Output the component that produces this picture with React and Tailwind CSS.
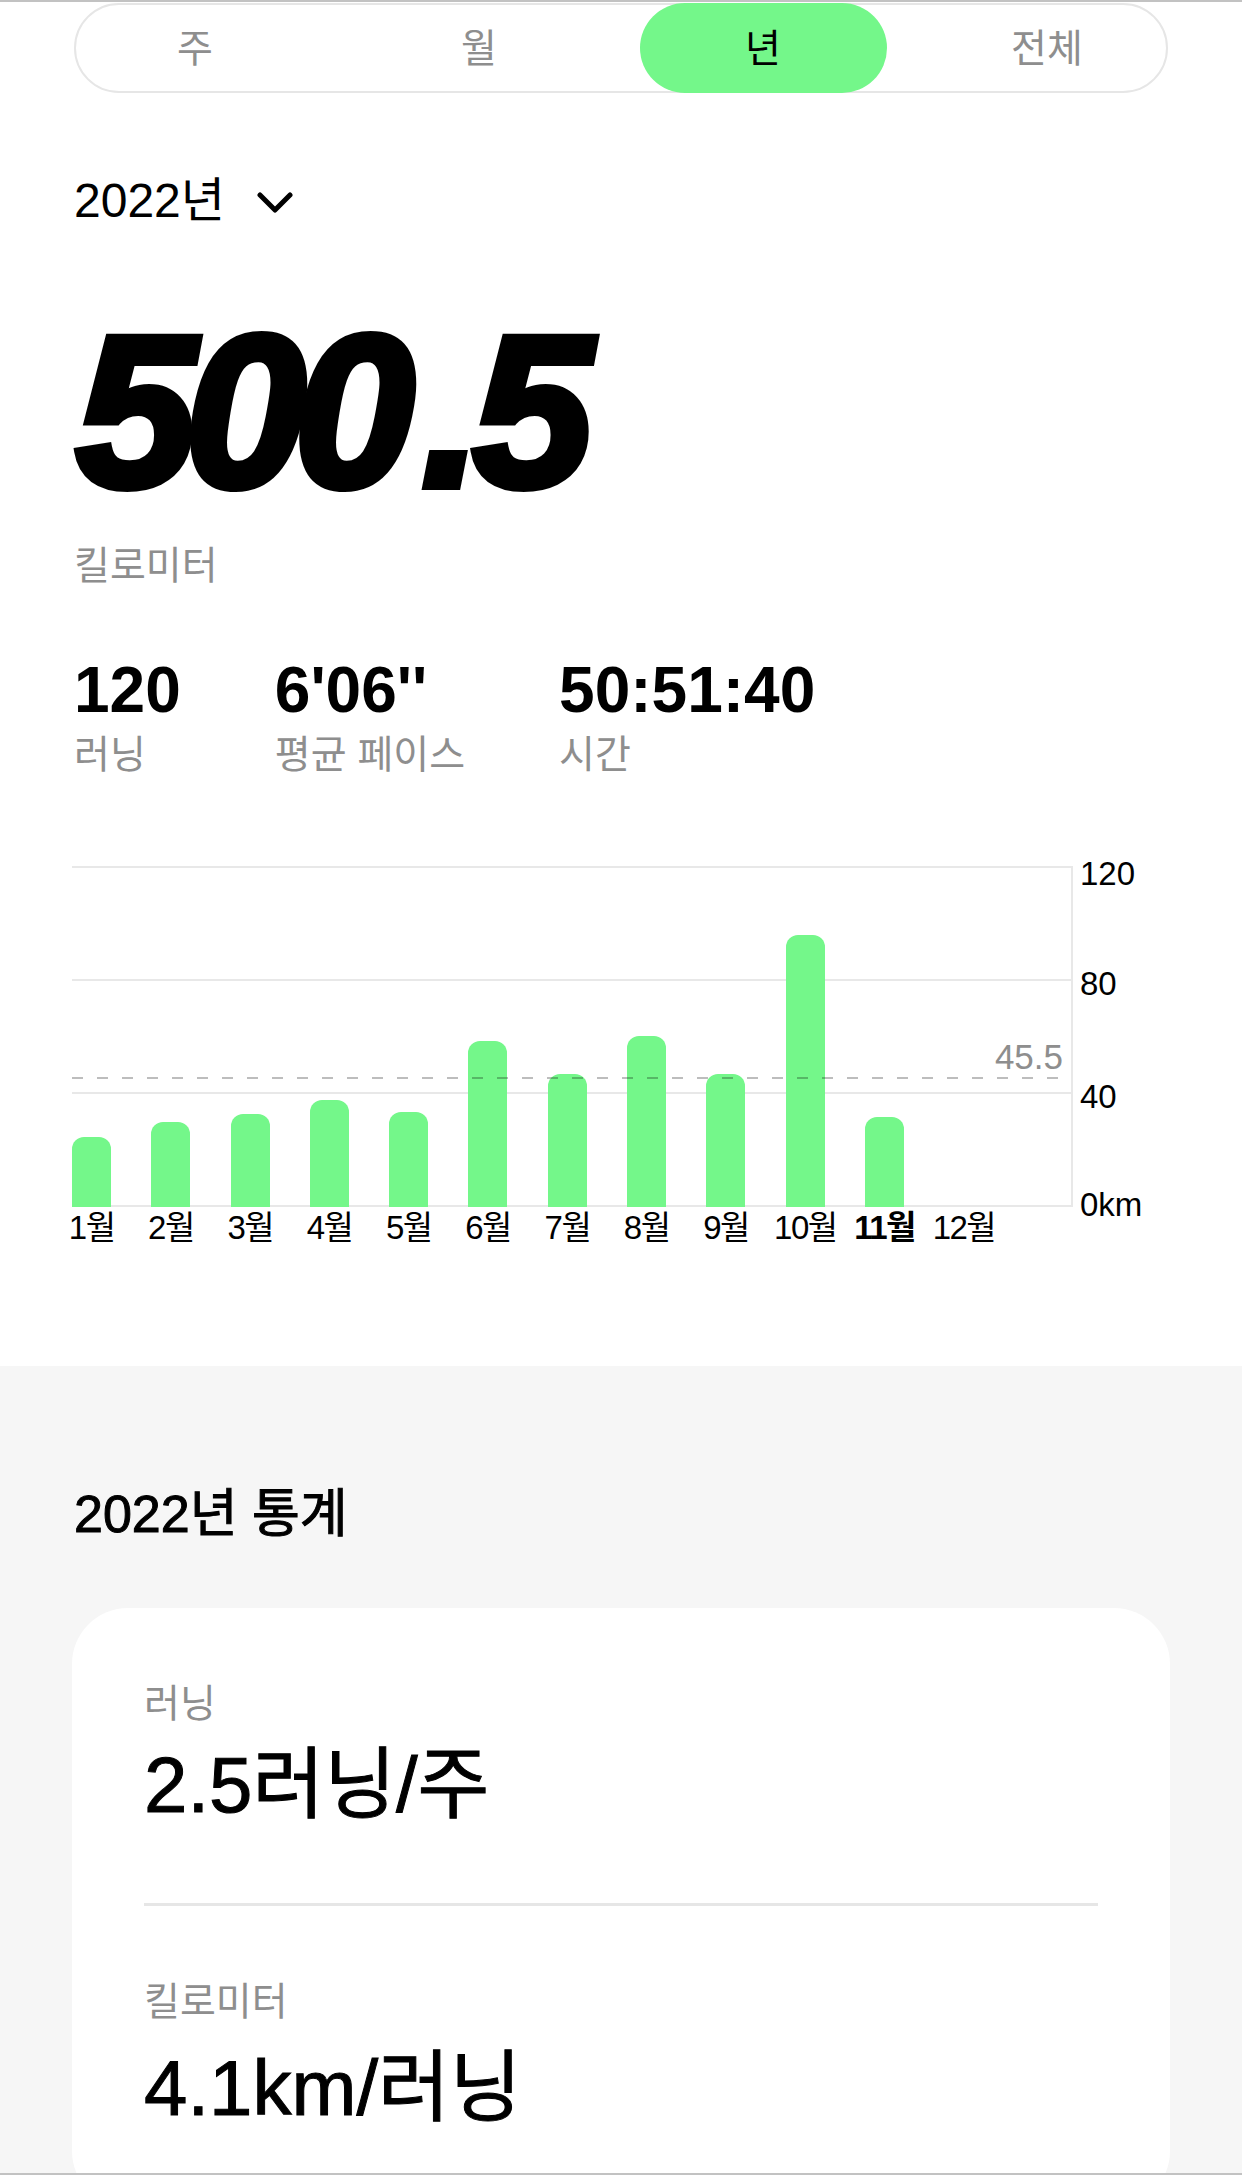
import React from "react"

const font = { fontFamily: '"Liberation Sans", "Noto Sans CJK KR", sans-serif' }

const tabs = ["주", "월", "년", "전체"]
const bars = [70, 85, 93, 107, 95, 166, 133, 171, 133, 272, 90]
const months = ["1월", "2월", "3월", "4월", "5월", "6월", "7월", "8월", "9월", "10월", "11월", "12월"]
const yLabels = [
  { label: "120", top: "top-[-9px]" },
  { label: "80", top: "top-[101px]" },
  { label: "40", top: "top-[214px]" },
  { label: "0km", top: "top-[322px]" },
]

function Segmented() {
  return (
    <div className="relative mx-[74px] mt-[1px] h-[90px] rounded-full border-2 border-[#e6e6e6]">
      <div className="absolute -inset-[2px] -mx-[21px] grid grid-cols-4">
        {tabs.map((t, i) => (
          <div key={t} className="flex items-center justify-center">
            <div
              className={`flex h-full w-[247px] items-center justify-center rounded-full text-[39px] leading-none ${
                i === 2 ? "bg-[#74f78a] text-black" : "text-[#8e8e8e]"
              }`}
            >
              {t}
            </div>
          </div>
        ))}
      </div>
    </div>
  )
}

function Chart() {
  return (
    <div className="mt-[92px]">
      <div className="relative ml-[72px] h-[341px] w-[1001px]">
        <div className="absolute inset-0 flex flex-col justify-between">
          <div className="h-[2px] bg-[#e8e8e8]" />
          <div className="h-[2px] bg-[#e8e8e8]" />
          <div className="h-[2px] bg-[#e8e8e8]" />
          <div className="h-[2px] bg-[#e8e8e8]" />
        </div>
        <div className="absolute right-0 top-0 h-full w-[2px] bg-[#e8e8e8]" />
        <div className="absolute bottom-0 left-0 flex items-end gap-[40.3px]">
          {bars.map((h, i) => (
            <div key={i} className="w-[39px] rounded-t-[12px] bg-[#74f78a]" style={{ height: h }} />
          ))}
        </div>
        <svg className="absolute left-0 top-[211px]" width="1000" height="2">
          <line x1="0" y1="1" x2="1000" y2="1" stroke="rgba(0,0,0,0.26)" strokeWidth="2" strokeDasharray="11 14" />
        </svg>
        <div className="absolute right-[10px] top-[173px] text-[35px] leading-none text-[#8e8e8e]">45.5</div>
        {yLabels.map((y) => (
          <div key={y.label} className={`absolute left-[1008px] ${y.top} text-[33px] leading-none text-black`}>
            {y.label}
          </div>
        ))}
      </div>
      <div className="ml-[52px] mt-[4px] flex">
        {months.map((m, i) => (
          <div
            key={m}
            className={`w-[79.3px] shrink-0 whitespace-nowrap text-center text-[33px] leading-none tracking-[-1.5px] text-black ${
              i === 10 ? "font-bold" : ""
            }`}
          >
            {m}
          </div>
        ))}
      </div>
    </div>
  )
}

function StatBlock({ label, value, className, valueGap }) {
  return (
    <div className={className}>
      <div className="text-[39px] leading-none text-[#8e8e8e]">{label}</div>
      <div className={`${valueGap} text-[78px] leading-none text-black [-webkit-text-stroke:1px_black]`}>{value}</div>
    </div>
  )
}

export default function App() {
  return (
    <div className="h-[2175px] overflow-hidden border-y-2 border-[#c2c2c2] bg-white" style={font}>
      <div className="pb-[122px]">
        <Segmented />

        <div className="ml-[74px] mt-[84px] flex items-center">
          <span className="text-[48px] leading-none text-black">2022년</span>
          <svg className="ml-[32px] mt-[4px]" width="36" height="24" viewBox="0 0 36 24">
            <path d="M3 4 L18 19 L33 4" fill="none" stroke="black" strokeWidth="5" strokeLinecap="round" strokeLinejoin="round" />
          </svg>
        </div>

        <div className="ml-[76px] mt-[78px] text-[216px] font-bold italic leading-none tracking-[-11px] text-black [-webkit-text-stroke:8px_black]">
          500<span className="ml-[18px] mr-[2px]">.</span>5
        </div>
        <div className="ml-[74px] mt-[27px] text-[39px] leading-none text-[#8e8e8e]">킬로미터</div>

        <div className="ml-[74px] mt-[73px] flex gap-[94px]">
          <div>
            <div className="text-[64px] font-semibold leading-none text-black">120</div>
            <div className="mt-[13px] text-[39px] leading-none text-[#8e8e8e]">러닝</div>
          </div>
          <div>
            <div className="text-[64px] font-semibold leading-none text-black">6'06''</div>
            <div className="mt-[13px] text-[39px] leading-none text-[#8e8e8e]">평균 페이스</div>
          </div>
          <div>
            <div className="text-[64px] font-semibold leading-none text-black">50:51:40</div>
            <div className="mt-[13px] text-[39px] leading-none text-[#8e8e8e]">시간</div>
          </div>
        </div>

        <Chart />
      </div>

      <div className="bg-[#f6f6f6] pt-[122px]">
        <div className="ml-[74px] text-[52px] leading-none text-black [-webkit-text-stroke:1px_black]">2022년 통계</div>
        <div className="mx-[72px] mt-[68px] rounded-[56px] bg-white px-[72px] pb-[80px] pt-[76px]">
          <StatBlock label="러닝" value="2.5러닝/주" valueGap="mt-[23px]" />
          <div className="mt-[79px] h-[3px] bg-[#e6e6e6]" />
          <StatBlock label="킬로미터" value="4.1km/러닝" className="mt-[76px]" valueGap="mt-[28px]" />
        </div>
      </div>
    </div>
  )
}
